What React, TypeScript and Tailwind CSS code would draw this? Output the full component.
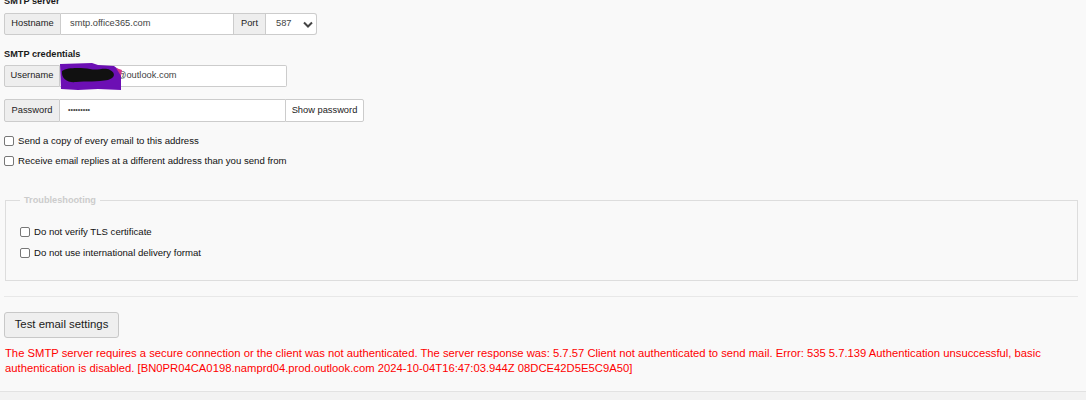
import React from "react";

const FONT = { fontFamily: '"Liberation Sans", Arial, sans-serif' };

function Check({ label }: { label: string }) {
  return (
    <label className="flex items-center gap-[4px] h-[12px] text-[9.6px] text-[#111]">
      <span className="block w-[10px] h-[10px] rounded-[2px] border border-[#777] bg-white" />
      <span className="leading-[12px]">{label}</span>
    </label>
  );
}

function Redaction() {
  return (
    <svg
      className="absolute left-[-2px] top-[-4px]"
      width="66"
      height="30"
      viewBox="0 0 66 30"
      aria-hidden="true"
    >
      <path
        d="M2 2 L34 1 L40 3 L56 4 L60 7 L63 10 L63 28 L40 27 L20 28 L3 27 Z"
        fill="#6c0fb4"
      />
      <path d="M58 6 L64 8 L63 14 Z" fill="#d23a8c" />
      <path
        d="M4 9 C10 5 24 6 32 7 C40 9 46 5 52 8 C58 11 57 16 50 18 C40 20 28 19 18 20 C10 21 3 17 4 9 Z"
        fill="#111"
      />
    </svg>
  );
}

export default function App() {
  return (
    <div className="w-[1086px] h-[400px] overflow-hidden bg-[#f9f9f9]" style={FONT}>
      <div className="pl-[4px] pr-[8px]">
        {/* SMTP server */}
        <div className="mt-[-5px] h-[12px] text-[9.2px] leading-[12px] font-bold text-[#1a1a1a]">
          SMTP server
        </div>
        <div className="mt-[6px] flex h-[22px] w-[313px] text-[9.3px]">
          <div className="flex items-center w-[57px] justify-center border border-[#ccc] bg-[#eee] text-[#222] rounded-l-[2px]">
            Hostname
          </div>
          <div className="flex items-center w-[172px] border-y border-[#ccc] bg-white pl-[9px] text-[#444]">
            smtp.office365.com
          </div>
          <div className="flex items-center w-[33px] justify-center border border-[#ccc] bg-[#eee] text-[#222]">
            Port
          </div>
          <div className="flex items-center justify-between w-[51px] border-y border-r border-[#ccc] bg-white pl-[10px] pr-[3px] text-[#444] rounded-r-[3px]">
            <span>587</span>
            <svg width="10" height="7" viewBox="0 0 10 7" aria-hidden="true">
              <path d="M1 1.5 L5 5.5 L9 1.5" fill="none" stroke="#444" strokeWidth="2" />
            </svg>
          </div>
        </div>

        {/* SMTP credentials */}
        <div className="mt-[13px] h-[12px] text-[9.2px] leading-[12px] font-bold text-[#1a1a1a]">
          SMTP credentials
        </div>
        <div className="mt-[5px] flex h-[22px] w-[283px] text-[9.3px]">
          <div className="flex items-center w-[56px] justify-center border border-[#ccc] bg-[#eee] text-[#222] rounded-l-[2px]">
            Username
          </div>
          <div className="relative flex flex-1 items-center border-y border-r border-[#ccc] bg-white pl-[57px] text-[#444] rounded-r-[2px]">
            <Redaction />
            @outlook.com
          </div>
        </div>

        <div className="mt-[12px] flex h-[23px] w-[360px] text-[9.3px]">
          <div className="flex items-center w-[56px] justify-center border border-[#ccc] bg-[#eee] text-[#222] rounded-l-[2px]">
            Password
          </div>
          <div className="flex w-[225px] items-center border-y border-[#ccc] bg-white pl-[8px] text-[#444] text-[7px]">
            •••••••••
          </div>
          <div className="flex flex-1 items-center justify-center border border-[#ccc] bg-white text-[#222] rounded-r-[2px]">
            Show password
          </div>
        </div>

        <div className="mt-[13px] flex flex-col gap-[8px]">
          <Check label="Send a copy of every email to this address" />
          <Check label="Receive email replies at a different address than you send from" />
        </div>

        {/* Troubleshooting */}
        <fieldset className="mt-[27px] ml-[1px] h-[87px] border border-[#ddd] pl-[14px]">
          <legend className="px-[4px] text-[9.2px] leading-[12px] font-bold text-[#ccc]">
            Troubleshooting
          </legend>
          <div className="mt-[20px] flex flex-col gap-[9px]">
            <Check label="Do not verify TLS certificate" />
            <Check label="Do not use international delivery format" />
          </div>
        </fieldset>

        <div className="mt-[15px] h-px bg-[#e8e8e8]" />

        <button className="mt-[15px] h-[26px] w-[115px] rounded-[3px] border border-[#c8c8c8] bg-[#efefef] text-[11.4px] text-[#1a1a1a]">
          Test email settings
        </button>

        <p className="mt-[8px] pl-[1px] text-[11.25px] leading-[15px] text-[#ff0000]">
          The SMTP server requires a secure connection or the client was not authenticated. The server response was: 5.7.57 Client not authenticated to send mail. Error: 535 5.7.139 Authentication unsuccessful, basic authentication is disabled. [BN0PR04CA0198.namprd04.prod.outlook.com 2024-10-04T16:47:03.944Z 08DCE42D5E5C9A50]
        </p>
      </div>
      <div className="mt-[15px] h-[20px] border-t border-[#e2e2e2] bg-[#f2f2f2]" />
    </div>
  );
}
